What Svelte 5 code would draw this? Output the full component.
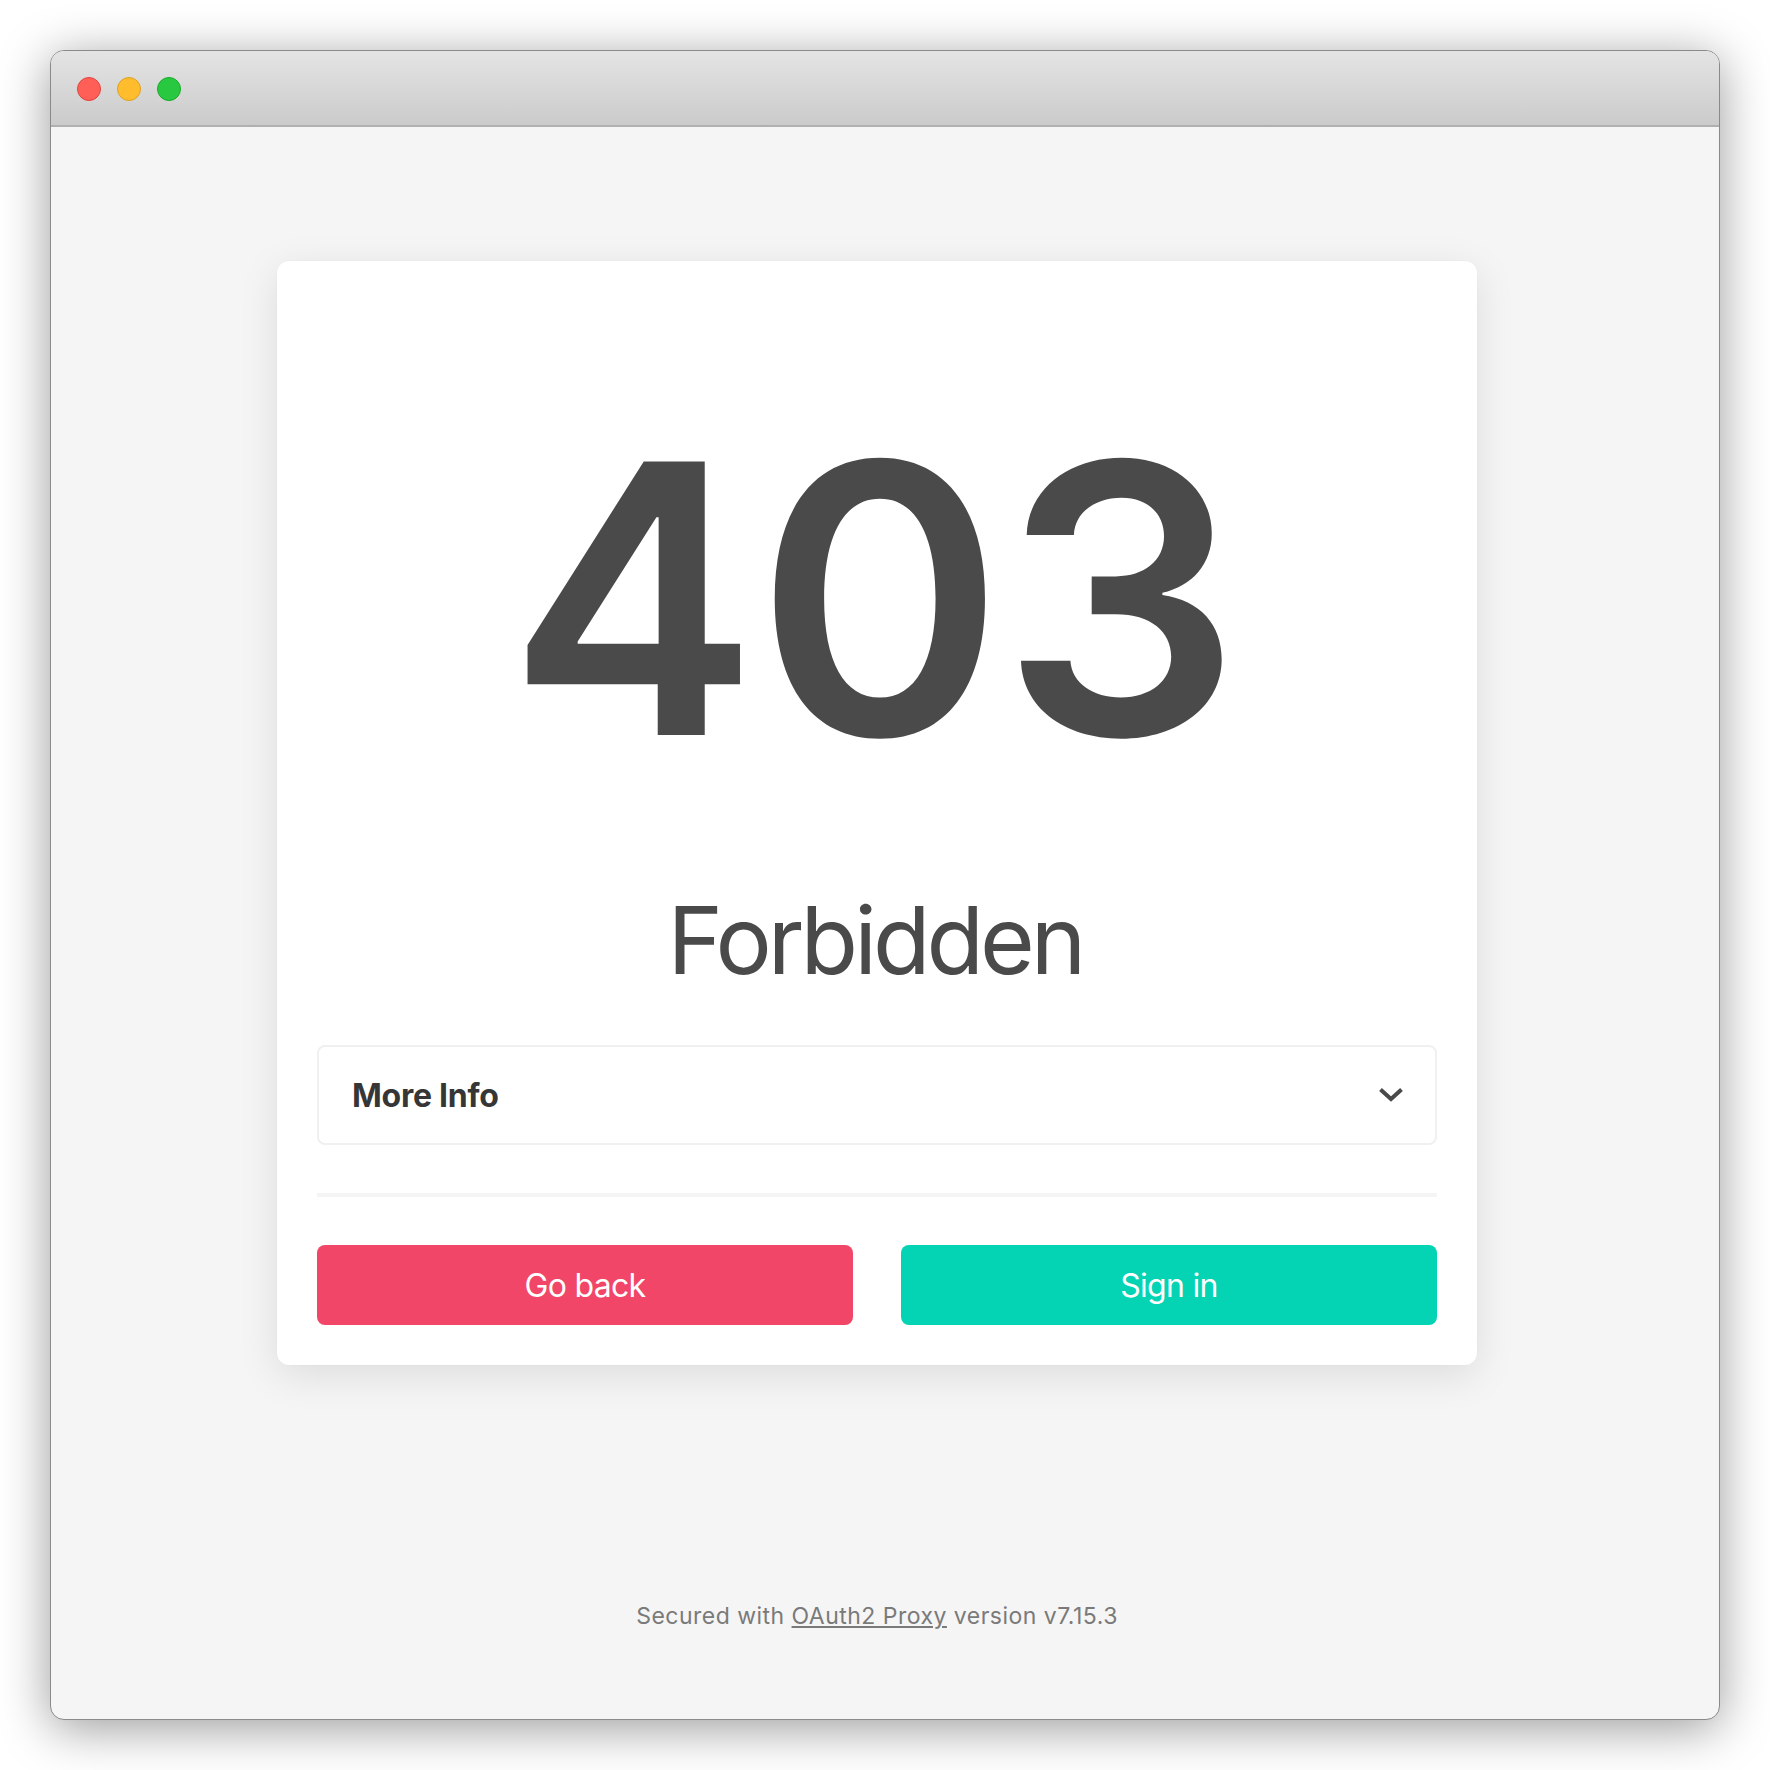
<script>
  let open = $state(false);
</script>

<div class="stage">
  <div class="window">
    <div class="titlebar">
      <span class="dot red"></span>
      <span class="dot yellow"></span>
      <span class="dot green"></span>
    </div>
    <div class="page">
      <section class="card">
        <h1 class="code">403</h1>
        <h2 class="status">Forbidden</h2>
        <button class="more" onclick={() => (open = !open)}>
          <span>More Info</span>
          <svg class:flip={open} width="26" height="16" viewBox="0 0 26 16" fill="none">
            <path d="M2.5 2.5 13 12 23.5 2.5" stroke="#4a4a4a" stroke-width="4" />
          </svg>
        </button>
        <hr />
        <div class="actions">
          <button class="btn danger">Go back</button>
          <button class="btn primary">Sign in</button>
        </div>
      </section>
      <footer>Secured with <a href="#top">OAuth2 Proxy</a> version v7.15.3</footer>
    </div>
  </div>
</div>

<style>
  :global(body) {
    margin: 0;
    background: #fff;
  }

  .stage {
    box-sizing: border-box;
    width: 1770px;
    height: 1770px;
    padding: 50px;
    font-family: Inter, "Liberation Sans", sans-serif;
  }

  .window {
    box-sizing: border-box;
    height: 1670px;
    display: flex;
    flex-direction: column;
    border: 1.5px solid #8a8a8a;
    border-radius: 14px;
    background: #f5f5f5;
    box-shadow: 0 8px 50px rgba(0, 0, 0, 0.4);
    overflow: hidden;
  }

  .titlebar {
    flex: none;
    box-sizing: border-box;
    height: 76px;
    display: flex;
    align-items: center;
    gap: 16px;
    padding: 2px 0 0 25.5px;
    background: linear-gradient(#e4e4e4, #cbcbcb);
    border-bottom: 2px solid #b0b0b0;
  }

  .dot {
    box-sizing: border-box;
    width: 24px;
    height: 24px;
    border-radius: 50%;
    border: 1px solid;
  }

  .red {
    background: #ff5f57;
    border-color: #e0443e;
  }

  .yellow {
    background: #ffbd2e;
    border-color: #dea123;
  }

  .green {
    background: #28c940;
    border-color: #1aab29;
  }

  .page {
    flex: 1;
    display: flex;
    flex-direction: column;
    align-items: center;
    padding: 134px 16px 0 0;
  }

  .card {
    box-sizing: border-box;
    width: 1200px;
    padding: 40px;
    background: #fff;
    border-radius: 12px;
    box-shadow: 0 10px 40px rgba(10, 10, 10, 0.1), 0 0 0 1px rgba(10, 10, 10, 0.012);
  }

  .code {
    margin: 0;
    height: 594px;
    padding-right: 8px;
    line-height: 596px;
    font-size: 376px;
    font-weight: 600;
    letter-spacing: -2.5px;
    text-align: center;
    color: #4a4a4a;
  }

  .status {
    margin: 0 0 60px;
    height: 90px;
    padding-right: 4px;
    line-height: 90px;
    font-size: 94px;
    font-weight: 400;
    letter-spacing: -4px;
    text-align: center;
    color: #4a4a4a;
  }

  .more {
    box-sizing: border-box;
    width: 100%;
    height: 100px;
    display: flex;
    align-items: center;
    justify-content: space-between;
    padding: 0 31px 0 33px;
    background: #fff;
    border: 2px solid #f0f0f0;
    border-radius: 8px;
    font-family: inherit;
    font-size: 32px;
    font-weight: 700;
    letter-spacing: -0.25px;
    color: #363636;
    cursor: pointer;
  }

  .flip {
    transform: rotate(180deg);
  }

  hr {
    height: 4px;
    margin: 48px 0;
    border: 0;
    background: #f5f5f5;
  }

  .actions {
    display: grid;
    grid-template-columns: 1fr 1fr;
    gap: 48px;
  }

  .btn {
    height: 80px;
    border: 0;
    border-radius: 8px;
    font-family: inherit;
    font-size: 32px;
    letter-spacing: -0.7px;
    color: #fff;
    cursor: pointer;
  }

  .danger {
    background: #f14668;
  }

  .primary {
    background: #04d3b4;
  }

  footer {
    margin-top: 237px;
    font-size: 23px;
    letter-spacing: 0.48px;
    color: #7a7a7a;
  }

  footer a {
    color: inherit;
  }
</style>
